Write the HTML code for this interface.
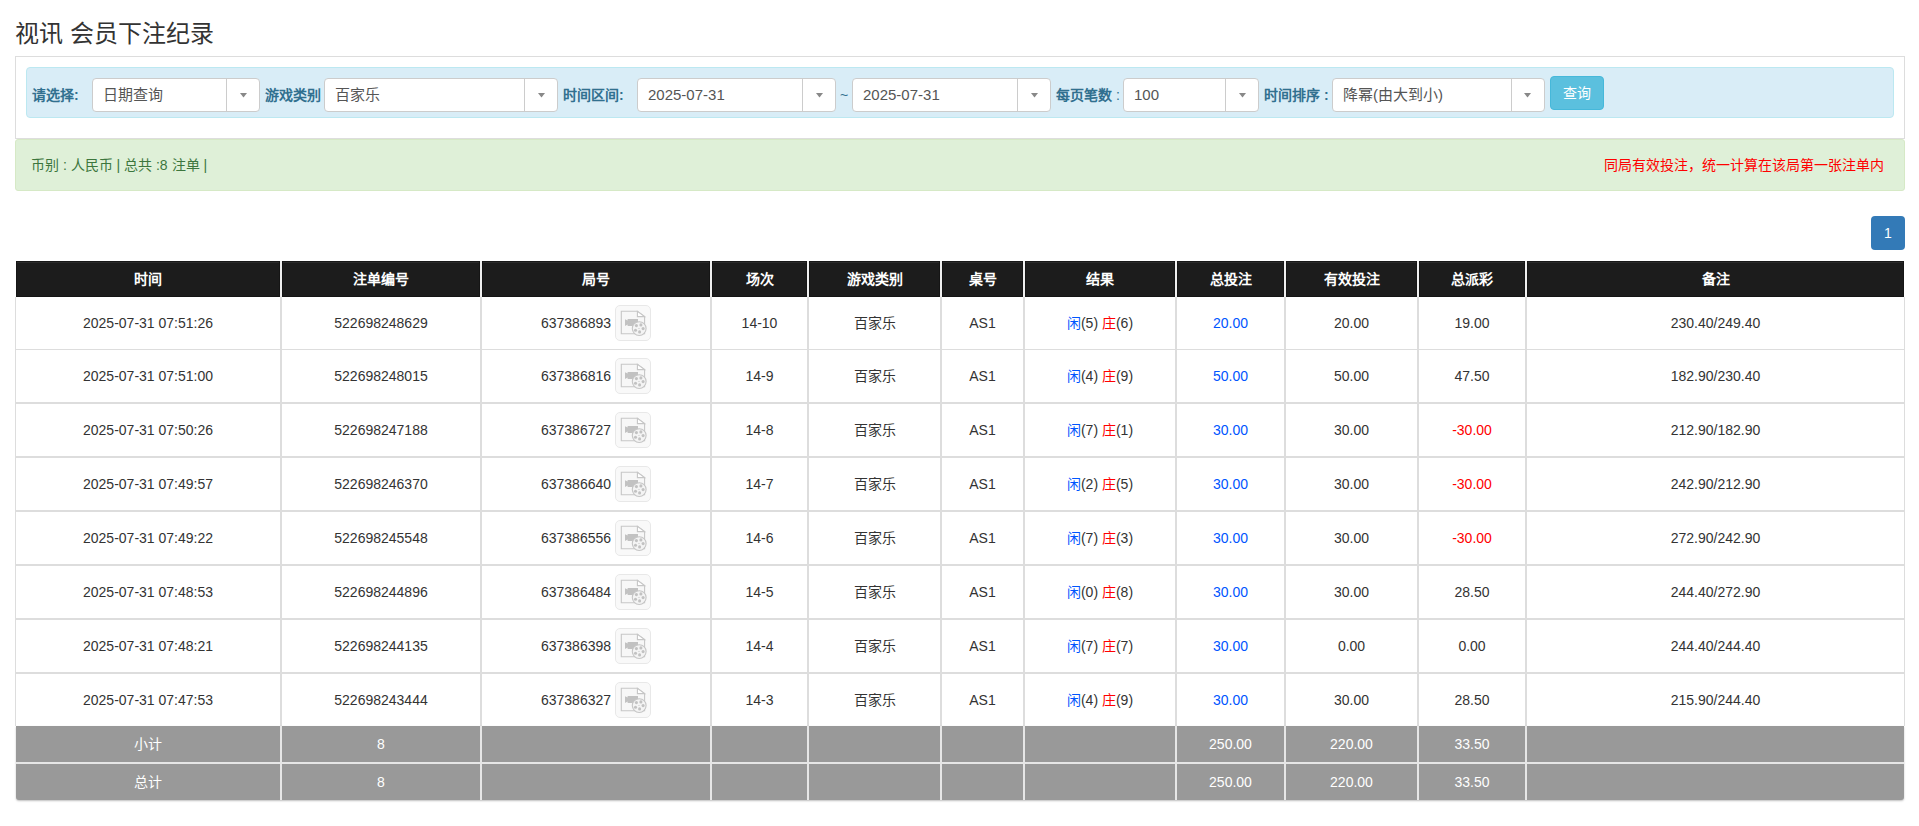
<!DOCTYPE html>
<html lang="zh-CN"><head><meta charset="utf-8">
<style>
*{box-sizing:border-box;margin:0;padding:0}
html,body{width:1919px;height:826px;overflow:hidden;background:#fff}
body{font-family:"Liberation Sans",sans-serif;color:#333;font-size:13px;position:relative}
.a{position:absolute}
.title{left:15px;top:19px;font-size:24px;line-height:30px;color:#333;white-space:nowrap}
.well{left:15px;top:56px;width:1890px;height:83px;border:1px solid #ddd}
.info{left:26px;top:67px;width:1868px;height:51px;background:#d9edf7;border:1px solid #bce8f1;border-radius:4px}
.lbl{color:#31708f;font-weight:bold;font-size:14px;line-height:16px;top:87px;white-space:nowrap}
.sel{top:78px;height:34px;background:#fff;border:1px solid #ccc;border-radius:4px}
.sel .t{position:absolute;left:10px;top:7px;font-size:15px;line-height:18px;color:#555;white-space:nowrap}
.sel .d{position:absolute;top:0;bottom:0;width:1px;background:#ccc}
.sel .c{position:absolute;top:14px;width:7px;height:5px;background:#888;clip-path:polygon(0 0,100% 0,50% 90%)}
.btn{left:1550px;top:76px;width:54px;height:34px;background:#5bc0de;border:1px solid #46b8da;border-radius:4px;color:#fff;font-size:14px;line-height:32px;text-align:center}
.succ{left:15px;top:139px;width:1890px;height:52px;background:#dff0d8;border:1px solid #d6e9c6;border-radius:3px}
.st{left:31px;top:156px;color:#3c763d;font-size:14px;line-height:18px;white-space:nowrap}
.warn{right:35px;top:156px;color:#f00;font-size:14px;line-height:18px;white-space:nowrap}
.page{left:1871px;top:216px;width:34px;height:34px;background:#337ab7;border-radius:4px;color:#fff;font-weight:normal;font-size:14px;line-height:35px;text-align:center}
.hl{left:16px;width:1888px;background:#ddd}
.thead{left:16px;top:261px;width:1888px;height:36px;background:#efefef}
.thc{top:261px;height:36px;background:#1c1c1c;box-shadow:inset 1px 0 #151515,inset -1px 0 #151515,inset 0 -1px #141414,inset 0 1px #181818,inset 0 2px #2a2a2a}
.th{top:261px;height:36px;line-height:36px;text-align:center;color:#fff;font-weight:bold;font-size:14px;white-space:nowrap}
.td{height:52px;line-height:52px;text-align:center;font-size:14px;color:#333;white-space:nowrap}
.bl{color:#0055ff}.rd{color:#f00}
.ic{display:inline-block;width:36px;height:36px;vertical-align:middle;margin-left:4px}
.ic svg{position:absolute;left:0;top:0}
.gray{left:16px;width:1888px;background:#999;border-radius:0 0 3px 3px;box-shadow:0 1px 2px rgba(0,0,0,.25)}
.tg{height:36px;line-height:36px;text-align:center;color:#fff;font-size:14px;white-space:nowrap}
</style></head><body>
<div class="a title">视讯 会员下注纪录</div>
<div class="a well"></div>
<div class="a info"></div>
<div class="a lbl" style="left:32px">请选择:</div>
<div class="a sel" style="left:92px;width:168px"><span class="t">日期查询</span><span class="d" style="left:133px"></span><span class="c" style="left:147px"></span></div>
<div class="a lbl" style="left:265px">游戏类别</div>
<div class="a sel" style="left:324px;width:234px"><span class="t">百家乐</span><span class="d" style="left:199px"></span><span class="c" style="left:213px"></span></div>
<div class="a lbl" style="left:563px">时间区间:</div>
<div class="a sel" style="left:637px;width:199px"><span class="t">2025-07-31</span><span class="d" style="left:164px"></span><span class="c" style="left:178px"></span></div>
<div class="a lbl" style="left:840px;font-weight:normal">~</div>
<div class="a sel" style="left:852px;width:199px"><span class="t">2025-07-31</span><span class="d" style="left:164px"></span><span class="c" style="left:178px"></span></div>
<div class="a lbl" style="left:1056px">每页笔数 <span style="font-weight:normal">:</span></div>
<div class="a sel" style="left:1123px;width:136px"><span class="t">100</span><span class="d" style="left:101px"></span><span class="c" style="left:115px"></span></div>
<div class="a lbl" style="left:1264px">时间排序 :</div>
<div class="a sel" style="left:1332px;width:213px"><span class="t">降幂(由大到小)</span><span class="d" style="left:178px"></span><span class="c" style="left:191px"></span></div>
<div class="a btn">查询</div>
<div class="a succ"></div>
<div class="a st">币别 : 人民币 | 总共 :8 注单 |</div>
<div class="a warn">同局有效投注，统一计算在该局第一张注单内</div>
<div class="a page">1</div>
<div class="a" style="left:15px;top:297px;width:1px;height:429px;background:#ddd"></div>
<div class="a" style="left:1904px;top:297px;width:1px;height:429px;background:#ddd"></div>
<div class="a hl" style="top:349px;height:1px"></div>
<div class="a hl" style="top:402px;height:2px"></div>
<div class="a hl" style="top:456px;height:2px"></div>
<div class="a hl" style="top:510px;height:2px"></div>
<div class="a hl" style="top:564px;height:2px"></div>
<div class="a hl" style="top:618px;height:2px"></div>
<div class="a hl" style="top:672px;height:2px"></div>
<div class="a" style="left:280px;top:297px;width:2px;height:429px;background:#ddd"></div>
<div class="a" style="left:480px;top:297px;width:2px;height:429px;background:#ddd"></div>
<div class="a" style="left:710px;top:297px;width:2px;height:429px;background:#ddd"></div>
<div class="a" style="left:807px;top:297px;width:2px;height:429px;background:#ddd"></div>
<div class="a" style="left:940px;top:297px;width:2px;height:429px;background:#ddd"></div>
<div class="a" style="left:1023px;top:297px;width:2px;height:429px;background:#ddd"></div>
<div class="a" style="left:1175px;top:297px;width:2px;height:429px;background:#ddd"></div>
<div class="a" style="left:1284px;top:297px;width:2px;height:429px;background:#ddd"></div>
<div class="a" style="left:1417px;top:297px;width:2px;height:429px;background:#ddd"></div>
<div class="a" style="left:1525px;top:297px;width:2px;height:429px;background:#ddd"></div>
<div class="a thead"></div>
<div class="a thc" style="left:16px;width:264px"></div>
<div class="a thc" style="left:282px;width:198px"></div>
<div class="a thc" style="left:482px;width:228px"></div>
<div class="a thc" style="left:712px;width:95px"></div>
<div class="a thc" style="left:809px;width:131px"></div>
<div class="a thc" style="left:942px;width:81px"></div>
<div class="a thc" style="left:1025px;width:150px"></div>
<div class="a thc" style="left:1177px;width:107px"></div>
<div class="a thc" style="left:1286px;width:131px"></div>
<div class="a thc" style="left:1419px;width:106px"></div>
<div class="a thc" style="left:1527px;width:377px"></div>
<div class="a th" style="left:16px;width:264px">时间</div>
<div class="a th" style="left:282px;width:198px">注单编号</div>
<div class="a th" style="left:482px;width:228px">局号</div>
<div class="a th" style="left:712px;width:95px">场次</div>
<div class="a th" style="left:809px;width:131px">游戏类别</div>
<div class="a th" style="left:942px;width:81px">桌号</div>
<div class="a th" style="left:1025px;width:150px">结果</div>
<div class="a th" style="left:1177px;width:107px">总投注</div>
<div class="a th" style="left:1286px;width:131px">有效投注</div>
<div class="a th" style="left:1419px;width:106px">总派彩</div>
<div class="a th" style="left:1527px;width:377px">备注</div>
<div class="a" style="left:280px;top:261px;width:2px;height:36px;background:#efefef"></div>
<div class="a" style="left:480px;top:261px;width:2px;height:36px;background:#efefef"></div>
<div class="a" style="left:710px;top:261px;width:2px;height:36px;background:#efefef"></div>
<div class="a" style="left:807px;top:261px;width:2px;height:36px;background:#efefef"></div>
<div class="a" style="left:940px;top:261px;width:2px;height:36px;background:#efefef"></div>
<div class="a" style="left:1023px;top:261px;width:2px;height:36px;background:#efefef"></div>
<div class="a" style="left:1175px;top:261px;width:2px;height:36px;background:#efefef"></div>
<div class="a" style="left:1284px;top:261px;width:2px;height:36px;background:#efefef"></div>
<div class="a" style="left:1417px;top:261px;width:2px;height:36px;background:#efefef"></div>
<div class="a" style="left:1525px;top:261px;width:2px;height:36px;background:#efefef"></div>
<div class="a td" style="left:16px;width:264px;top:297px">2025-07-31 07:51:26</div>
<div class="a td" style="left:282px;width:198px;top:297px">522698248629</div>
<div class="a td" style="left:482px;width:228px;top:297px">637386893<span class="ic"></span></div>
<div class="a" style="left:615px;top:305px;width:36px;height:36px"><svg width="36" height="36" viewBox="0 0 36 36"><rect x="0.5" y="0.5" width="35" height="35" rx="4.5" fill="#f9f9f9" stroke="#e8e8e8"/><path d="M6.3 6.3H22.4L29.6 11.6V28.8H6.3Z" fill="#f7f7f7" stroke="#c6c6c6" stroke-width="1.1"/><path d="M22.4 6.3V11.6H29.6Z" fill="#fff" stroke="#c6c6c6" stroke-width="1.1"/><path d="M10 14.2L12.6 15.6V14H23V21H12.6V19.5L10 20.9Z" fill="#c2c2c2"/><circle cx="24.2" cy="23.6" r="6.9" fill="#f4f4f4" stroke="#c6c6c6" stroke-width="1.1"/><g fill="#c2c2c2"><circle cx="21.4" cy="20.6" r="1.55"/><circle cx="25.9" cy="19.9" r="1.55"/><circle cx="28.1" cy="23.6" r="1.55"/><circle cx="24.6" cy="26.9" r="1.55"/><circle cx="20.5" cy="25.3" r="1.55"/><circle cx="24" cy="23.5" r="0.6"/></g></svg>
</div>
<div class="a td" style="left:712px;width:95px;top:297px">14-10</div>
<div class="a td" style="left:809px;width:131px;top:297px">百家乐</div>
<div class="a td" style="left:942px;width:81px;top:297px">AS1</div>
<div class="a td" style="left:1025px;width:150px;top:297px"><span class="bl">闲</span>(5) <span class="rd">庄</span>(6)</div>
<div class="a td" style="left:1177px;width:107px;top:297px"><span class="bl">20.00</span></div>
<div class="a td" style="left:1286px;width:131px;top:297px">20.00</div>
<div class="a td" style="left:1419px;width:106px;top:297px">19.00</div>
<div class="a td" style="left:1527px;width:377px;top:297px">230.40/249.40</div>
<div class="a td" style="left:16px;width:264px;top:350px">2025-07-31 07:51:00</div>
<div class="a td" style="left:282px;width:198px;top:350px">522698248015</div>
<div class="a td" style="left:482px;width:228px;top:350px">637386816<span class="ic"></span></div>
<div class="a" style="left:615px;top:358px;width:36px;height:36px"><svg width="36" height="36" viewBox="0 0 36 36"><rect x="0.5" y="0.5" width="35" height="35" rx="4.5" fill="#f9f9f9" stroke="#e8e8e8"/><path d="M6.3 6.3H22.4L29.6 11.6V28.8H6.3Z" fill="#f7f7f7" stroke="#c6c6c6" stroke-width="1.1"/><path d="M22.4 6.3V11.6H29.6Z" fill="#fff" stroke="#c6c6c6" stroke-width="1.1"/><path d="M10 14.2L12.6 15.6V14H23V21H12.6V19.5L10 20.9Z" fill="#c2c2c2"/><circle cx="24.2" cy="23.6" r="6.9" fill="#f4f4f4" stroke="#c6c6c6" stroke-width="1.1"/><g fill="#c2c2c2"><circle cx="21.4" cy="20.6" r="1.55"/><circle cx="25.9" cy="19.9" r="1.55"/><circle cx="28.1" cy="23.6" r="1.55"/><circle cx="24.6" cy="26.9" r="1.55"/><circle cx="20.5" cy="25.3" r="1.55"/><circle cx="24" cy="23.5" r="0.6"/></g></svg>
</div>
<div class="a td" style="left:712px;width:95px;top:350px">14-9</div>
<div class="a td" style="left:809px;width:131px;top:350px">百家乐</div>
<div class="a td" style="left:942px;width:81px;top:350px">AS1</div>
<div class="a td" style="left:1025px;width:150px;top:350px"><span class="bl">闲</span>(4) <span class="rd">庄</span>(9)</div>
<div class="a td" style="left:1177px;width:107px;top:350px"><span class="bl">50.00</span></div>
<div class="a td" style="left:1286px;width:131px;top:350px">50.00</div>
<div class="a td" style="left:1419px;width:106px;top:350px">47.50</div>
<div class="a td" style="left:1527px;width:377px;top:350px">182.90/230.40</div>
<div class="a td" style="left:16px;width:264px;top:404px">2025-07-31 07:50:26</div>
<div class="a td" style="left:282px;width:198px;top:404px">522698247188</div>
<div class="a td" style="left:482px;width:228px;top:404px">637386727<span class="ic"></span></div>
<div class="a" style="left:615px;top:412px;width:36px;height:36px"><svg width="36" height="36" viewBox="0 0 36 36"><rect x="0.5" y="0.5" width="35" height="35" rx="4.5" fill="#f9f9f9" stroke="#e8e8e8"/><path d="M6.3 6.3H22.4L29.6 11.6V28.8H6.3Z" fill="#f7f7f7" stroke="#c6c6c6" stroke-width="1.1"/><path d="M22.4 6.3V11.6H29.6Z" fill="#fff" stroke="#c6c6c6" stroke-width="1.1"/><path d="M10 14.2L12.6 15.6V14H23V21H12.6V19.5L10 20.9Z" fill="#c2c2c2"/><circle cx="24.2" cy="23.6" r="6.9" fill="#f4f4f4" stroke="#c6c6c6" stroke-width="1.1"/><g fill="#c2c2c2"><circle cx="21.4" cy="20.6" r="1.55"/><circle cx="25.9" cy="19.9" r="1.55"/><circle cx="28.1" cy="23.6" r="1.55"/><circle cx="24.6" cy="26.9" r="1.55"/><circle cx="20.5" cy="25.3" r="1.55"/><circle cx="24" cy="23.5" r="0.6"/></g></svg>
</div>
<div class="a td" style="left:712px;width:95px;top:404px">14-8</div>
<div class="a td" style="left:809px;width:131px;top:404px">百家乐</div>
<div class="a td" style="left:942px;width:81px;top:404px">AS1</div>
<div class="a td" style="left:1025px;width:150px;top:404px"><span class="bl">闲</span>(7) <span class="rd">庄</span>(1)</div>
<div class="a td" style="left:1177px;width:107px;top:404px"><span class="bl">30.00</span></div>
<div class="a td" style="left:1286px;width:131px;top:404px">30.00</div>
<div class="a td" style="left:1419px;width:106px;top:404px"><span class="rd">-30.00</span></div>
<div class="a td" style="left:1527px;width:377px;top:404px">212.90/182.90</div>
<div class="a td" style="left:16px;width:264px;top:458px">2025-07-31 07:49:57</div>
<div class="a td" style="left:282px;width:198px;top:458px">522698246370</div>
<div class="a td" style="left:482px;width:228px;top:458px">637386640<span class="ic"></span></div>
<div class="a" style="left:615px;top:466px;width:36px;height:36px"><svg width="36" height="36" viewBox="0 0 36 36"><rect x="0.5" y="0.5" width="35" height="35" rx="4.5" fill="#f9f9f9" stroke="#e8e8e8"/><path d="M6.3 6.3H22.4L29.6 11.6V28.8H6.3Z" fill="#f7f7f7" stroke="#c6c6c6" stroke-width="1.1"/><path d="M22.4 6.3V11.6H29.6Z" fill="#fff" stroke="#c6c6c6" stroke-width="1.1"/><path d="M10 14.2L12.6 15.6V14H23V21H12.6V19.5L10 20.9Z" fill="#c2c2c2"/><circle cx="24.2" cy="23.6" r="6.9" fill="#f4f4f4" stroke="#c6c6c6" stroke-width="1.1"/><g fill="#c2c2c2"><circle cx="21.4" cy="20.6" r="1.55"/><circle cx="25.9" cy="19.9" r="1.55"/><circle cx="28.1" cy="23.6" r="1.55"/><circle cx="24.6" cy="26.9" r="1.55"/><circle cx="20.5" cy="25.3" r="1.55"/><circle cx="24" cy="23.5" r="0.6"/></g></svg>
</div>
<div class="a td" style="left:712px;width:95px;top:458px">14-7</div>
<div class="a td" style="left:809px;width:131px;top:458px">百家乐</div>
<div class="a td" style="left:942px;width:81px;top:458px">AS1</div>
<div class="a td" style="left:1025px;width:150px;top:458px"><span class="bl">闲</span>(2) <span class="rd">庄</span>(5)</div>
<div class="a td" style="left:1177px;width:107px;top:458px"><span class="bl">30.00</span></div>
<div class="a td" style="left:1286px;width:131px;top:458px">30.00</div>
<div class="a td" style="left:1419px;width:106px;top:458px"><span class="rd">-30.00</span></div>
<div class="a td" style="left:1527px;width:377px;top:458px">242.90/212.90</div>
<div class="a td" style="left:16px;width:264px;top:512px">2025-07-31 07:49:22</div>
<div class="a td" style="left:282px;width:198px;top:512px">522698245548</div>
<div class="a td" style="left:482px;width:228px;top:512px">637386556<span class="ic"></span></div>
<div class="a" style="left:615px;top:520px;width:36px;height:36px"><svg width="36" height="36" viewBox="0 0 36 36"><rect x="0.5" y="0.5" width="35" height="35" rx="4.5" fill="#f9f9f9" stroke="#e8e8e8"/><path d="M6.3 6.3H22.4L29.6 11.6V28.8H6.3Z" fill="#f7f7f7" stroke="#c6c6c6" stroke-width="1.1"/><path d="M22.4 6.3V11.6H29.6Z" fill="#fff" stroke="#c6c6c6" stroke-width="1.1"/><path d="M10 14.2L12.6 15.6V14H23V21H12.6V19.5L10 20.9Z" fill="#c2c2c2"/><circle cx="24.2" cy="23.6" r="6.9" fill="#f4f4f4" stroke="#c6c6c6" stroke-width="1.1"/><g fill="#c2c2c2"><circle cx="21.4" cy="20.6" r="1.55"/><circle cx="25.9" cy="19.9" r="1.55"/><circle cx="28.1" cy="23.6" r="1.55"/><circle cx="24.6" cy="26.9" r="1.55"/><circle cx="20.5" cy="25.3" r="1.55"/><circle cx="24" cy="23.5" r="0.6"/></g></svg>
</div>
<div class="a td" style="left:712px;width:95px;top:512px">14-6</div>
<div class="a td" style="left:809px;width:131px;top:512px">百家乐</div>
<div class="a td" style="left:942px;width:81px;top:512px">AS1</div>
<div class="a td" style="left:1025px;width:150px;top:512px"><span class="bl">闲</span>(7) <span class="rd">庄</span>(3)</div>
<div class="a td" style="left:1177px;width:107px;top:512px"><span class="bl">30.00</span></div>
<div class="a td" style="left:1286px;width:131px;top:512px">30.00</div>
<div class="a td" style="left:1419px;width:106px;top:512px"><span class="rd">-30.00</span></div>
<div class="a td" style="left:1527px;width:377px;top:512px">272.90/242.90</div>
<div class="a td" style="left:16px;width:264px;top:566px">2025-07-31 07:48:53</div>
<div class="a td" style="left:282px;width:198px;top:566px">522698244896</div>
<div class="a td" style="left:482px;width:228px;top:566px">637386484<span class="ic"></span></div>
<div class="a" style="left:615px;top:574px;width:36px;height:36px"><svg width="36" height="36" viewBox="0 0 36 36"><rect x="0.5" y="0.5" width="35" height="35" rx="4.5" fill="#f9f9f9" stroke="#e8e8e8"/><path d="M6.3 6.3H22.4L29.6 11.6V28.8H6.3Z" fill="#f7f7f7" stroke="#c6c6c6" stroke-width="1.1"/><path d="M22.4 6.3V11.6H29.6Z" fill="#fff" stroke="#c6c6c6" stroke-width="1.1"/><path d="M10 14.2L12.6 15.6V14H23V21H12.6V19.5L10 20.9Z" fill="#c2c2c2"/><circle cx="24.2" cy="23.6" r="6.9" fill="#f4f4f4" stroke="#c6c6c6" stroke-width="1.1"/><g fill="#c2c2c2"><circle cx="21.4" cy="20.6" r="1.55"/><circle cx="25.9" cy="19.9" r="1.55"/><circle cx="28.1" cy="23.6" r="1.55"/><circle cx="24.6" cy="26.9" r="1.55"/><circle cx="20.5" cy="25.3" r="1.55"/><circle cx="24" cy="23.5" r="0.6"/></g></svg>
</div>
<div class="a td" style="left:712px;width:95px;top:566px">14-5</div>
<div class="a td" style="left:809px;width:131px;top:566px">百家乐</div>
<div class="a td" style="left:942px;width:81px;top:566px">AS1</div>
<div class="a td" style="left:1025px;width:150px;top:566px"><span class="bl">闲</span>(0) <span class="rd">庄</span>(8)</div>
<div class="a td" style="left:1177px;width:107px;top:566px"><span class="bl">30.00</span></div>
<div class="a td" style="left:1286px;width:131px;top:566px">30.00</div>
<div class="a td" style="left:1419px;width:106px;top:566px">28.50</div>
<div class="a td" style="left:1527px;width:377px;top:566px">244.40/272.90</div>
<div class="a td" style="left:16px;width:264px;top:620px">2025-07-31 07:48:21</div>
<div class="a td" style="left:282px;width:198px;top:620px">522698244135</div>
<div class="a td" style="left:482px;width:228px;top:620px">637386398<span class="ic"></span></div>
<div class="a" style="left:615px;top:628px;width:36px;height:36px"><svg width="36" height="36" viewBox="0 0 36 36"><rect x="0.5" y="0.5" width="35" height="35" rx="4.5" fill="#f9f9f9" stroke="#e8e8e8"/><path d="M6.3 6.3H22.4L29.6 11.6V28.8H6.3Z" fill="#f7f7f7" stroke="#c6c6c6" stroke-width="1.1"/><path d="M22.4 6.3V11.6H29.6Z" fill="#fff" stroke="#c6c6c6" stroke-width="1.1"/><path d="M10 14.2L12.6 15.6V14H23V21H12.6V19.5L10 20.9Z" fill="#c2c2c2"/><circle cx="24.2" cy="23.6" r="6.9" fill="#f4f4f4" stroke="#c6c6c6" stroke-width="1.1"/><g fill="#c2c2c2"><circle cx="21.4" cy="20.6" r="1.55"/><circle cx="25.9" cy="19.9" r="1.55"/><circle cx="28.1" cy="23.6" r="1.55"/><circle cx="24.6" cy="26.9" r="1.55"/><circle cx="20.5" cy="25.3" r="1.55"/><circle cx="24" cy="23.5" r="0.6"/></g></svg>
</div>
<div class="a td" style="left:712px;width:95px;top:620px">14-4</div>
<div class="a td" style="left:809px;width:131px;top:620px">百家乐</div>
<div class="a td" style="left:942px;width:81px;top:620px">AS1</div>
<div class="a td" style="left:1025px;width:150px;top:620px"><span class="bl">闲</span>(7) <span class="rd">庄</span>(7)</div>
<div class="a td" style="left:1177px;width:107px;top:620px"><span class="bl">30.00</span></div>
<div class="a td" style="left:1286px;width:131px;top:620px">0.00</div>
<div class="a td" style="left:1419px;width:106px;top:620px">0.00</div>
<div class="a td" style="left:1527px;width:377px;top:620px">244.40/244.40</div>
<div class="a td" style="left:16px;width:264px;top:674px">2025-07-31 07:47:53</div>
<div class="a td" style="left:282px;width:198px;top:674px">522698243444</div>
<div class="a td" style="left:482px;width:228px;top:674px">637386327<span class="ic"></span></div>
<div class="a" style="left:615px;top:682px;width:36px;height:36px"><svg width="36" height="36" viewBox="0 0 36 36"><rect x="0.5" y="0.5" width="35" height="35" rx="4.5" fill="#f9f9f9" stroke="#e8e8e8"/><path d="M6.3 6.3H22.4L29.6 11.6V28.8H6.3Z" fill="#f7f7f7" stroke="#c6c6c6" stroke-width="1.1"/><path d="M22.4 6.3V11.6H29.6Z" fill="#fff" stroke="#c6c6c6" stroke-width="1.1"/><path d="M10 14.2L12.6 15.6V14H23V21H12.6V19.5L10 20.9Z" fill="#c2c2c2"/><circle cx="24.2" cy="23.6" r="6.9" fill="#f4f4f4" stroke="#c6c6c6" stroke-width="1.1"/><g fill="#c2c2c2"><circle cx="21.4" cy="20.6" r="1.55"/><circle cx="25.9" cy="19.9" r="1.55"/><circle cx="28.1" cy="23.6" r="1.55"/><circle cx="24.6" cy="26.9" r="1.55"/><circle cx="20.5" cy="25.3" r="1.55"/><circle cx="24" cy="23.5" r="0.6"/></g></svg>
</div>
<div class="a td" style="left:712px;width:95px;top:674px">14-3</div>
<div class="a td" style="left:809px;width:131px;top:674px">百家乐</div>
<div class="a td" style="left:942px;width:81px;top:674px">AS1</div>
<div class="a td" style="left:1025px;width:150px;top:674px"><span class="bl">闲</span>(4) <span class="rd">庄</span>(9)</div>
<div class="a td" style="left:1177px;width:107px;top:674px"><span class="bl">30.00</span></div>
<div class="a td" style="left:1286px;width:131px;top:674px">30.00</div>
<div class="a td" style="left:1419px;width:106px;top:674px">28.50</div>
<div class="a td" style="left:1527px;width:377px;top:674px">215.90/244.40</div>
<div class="a gray" style="top:726px;height:74px"></div>
<div class="a" style="left:16px;top:762px;width:1888px;height:2px;background:#e6e6e6"></div>
<div class="a" style="left:280px;top:726px;width:2px;height:74px;background:#e6e6e6"></div>
<div class="a" style="left:480px;top:726px;width:2px;height:74px;background:#e6e6e6"></div>
<div class="a" style="left:710px;top:726px;width:2px;height:74px;background:#e6e6e6"></div>
<div class="a" style="left:807px;top:726px;width:2px;height:74px;background:#e6e6e6"></div>
<div class="a" style="left:940px;top:726px;width:2px;height:74px;background:#e6e6e6"></div>
<div class="a" style="left:1023px;top:726px;width:2px;height:74px;background:#e6e6e6"></div>
<div class="a" style="left:1175px;top:726px;width:2px;height:74px;background:#e6e6e6"></div>
<div class="a" style="left:1284px;top:726px;width:2px;height:74px;background:#e6e6e6"></div>
<div class="a" style="left:1417px;top:726px;width:2px;height:74px;background:#e6e6e6"></div>
<div class="a" style="left:1525px;top:726px;width:2px;height:74px;background:#e6e6e6"></div>
<div class="a tg" style="left:16px;width:264px;top:726px">小计</div>
<div class="a tg" style="left:282px;width:198px;top:726px">8</div>
<div class="a tg" style="left:1177px;width:107px;top:726px">250.00</div>
<div class="a tg" style="left:1286px;width:131px;top:726px">220.00</div>
<div class="a tg" style="left:1419px;width:106px;top:726px">33.50</div>
<div class="a tg" style="left:16px;width:264px;top:764px">总计</div>
<div class="a tg" style="left:282px;width:198px;top:764px">8</div>
<div class="a tg" style="left:1177px;width:107px;top:764px">250.00</div>
<div class="a tg" style="left:1286px;width:131px;top:764px">220.00</div>
<div class="a tg" style="left:1419px;width:106px;top:764px">33.50</div>
</body></html>
